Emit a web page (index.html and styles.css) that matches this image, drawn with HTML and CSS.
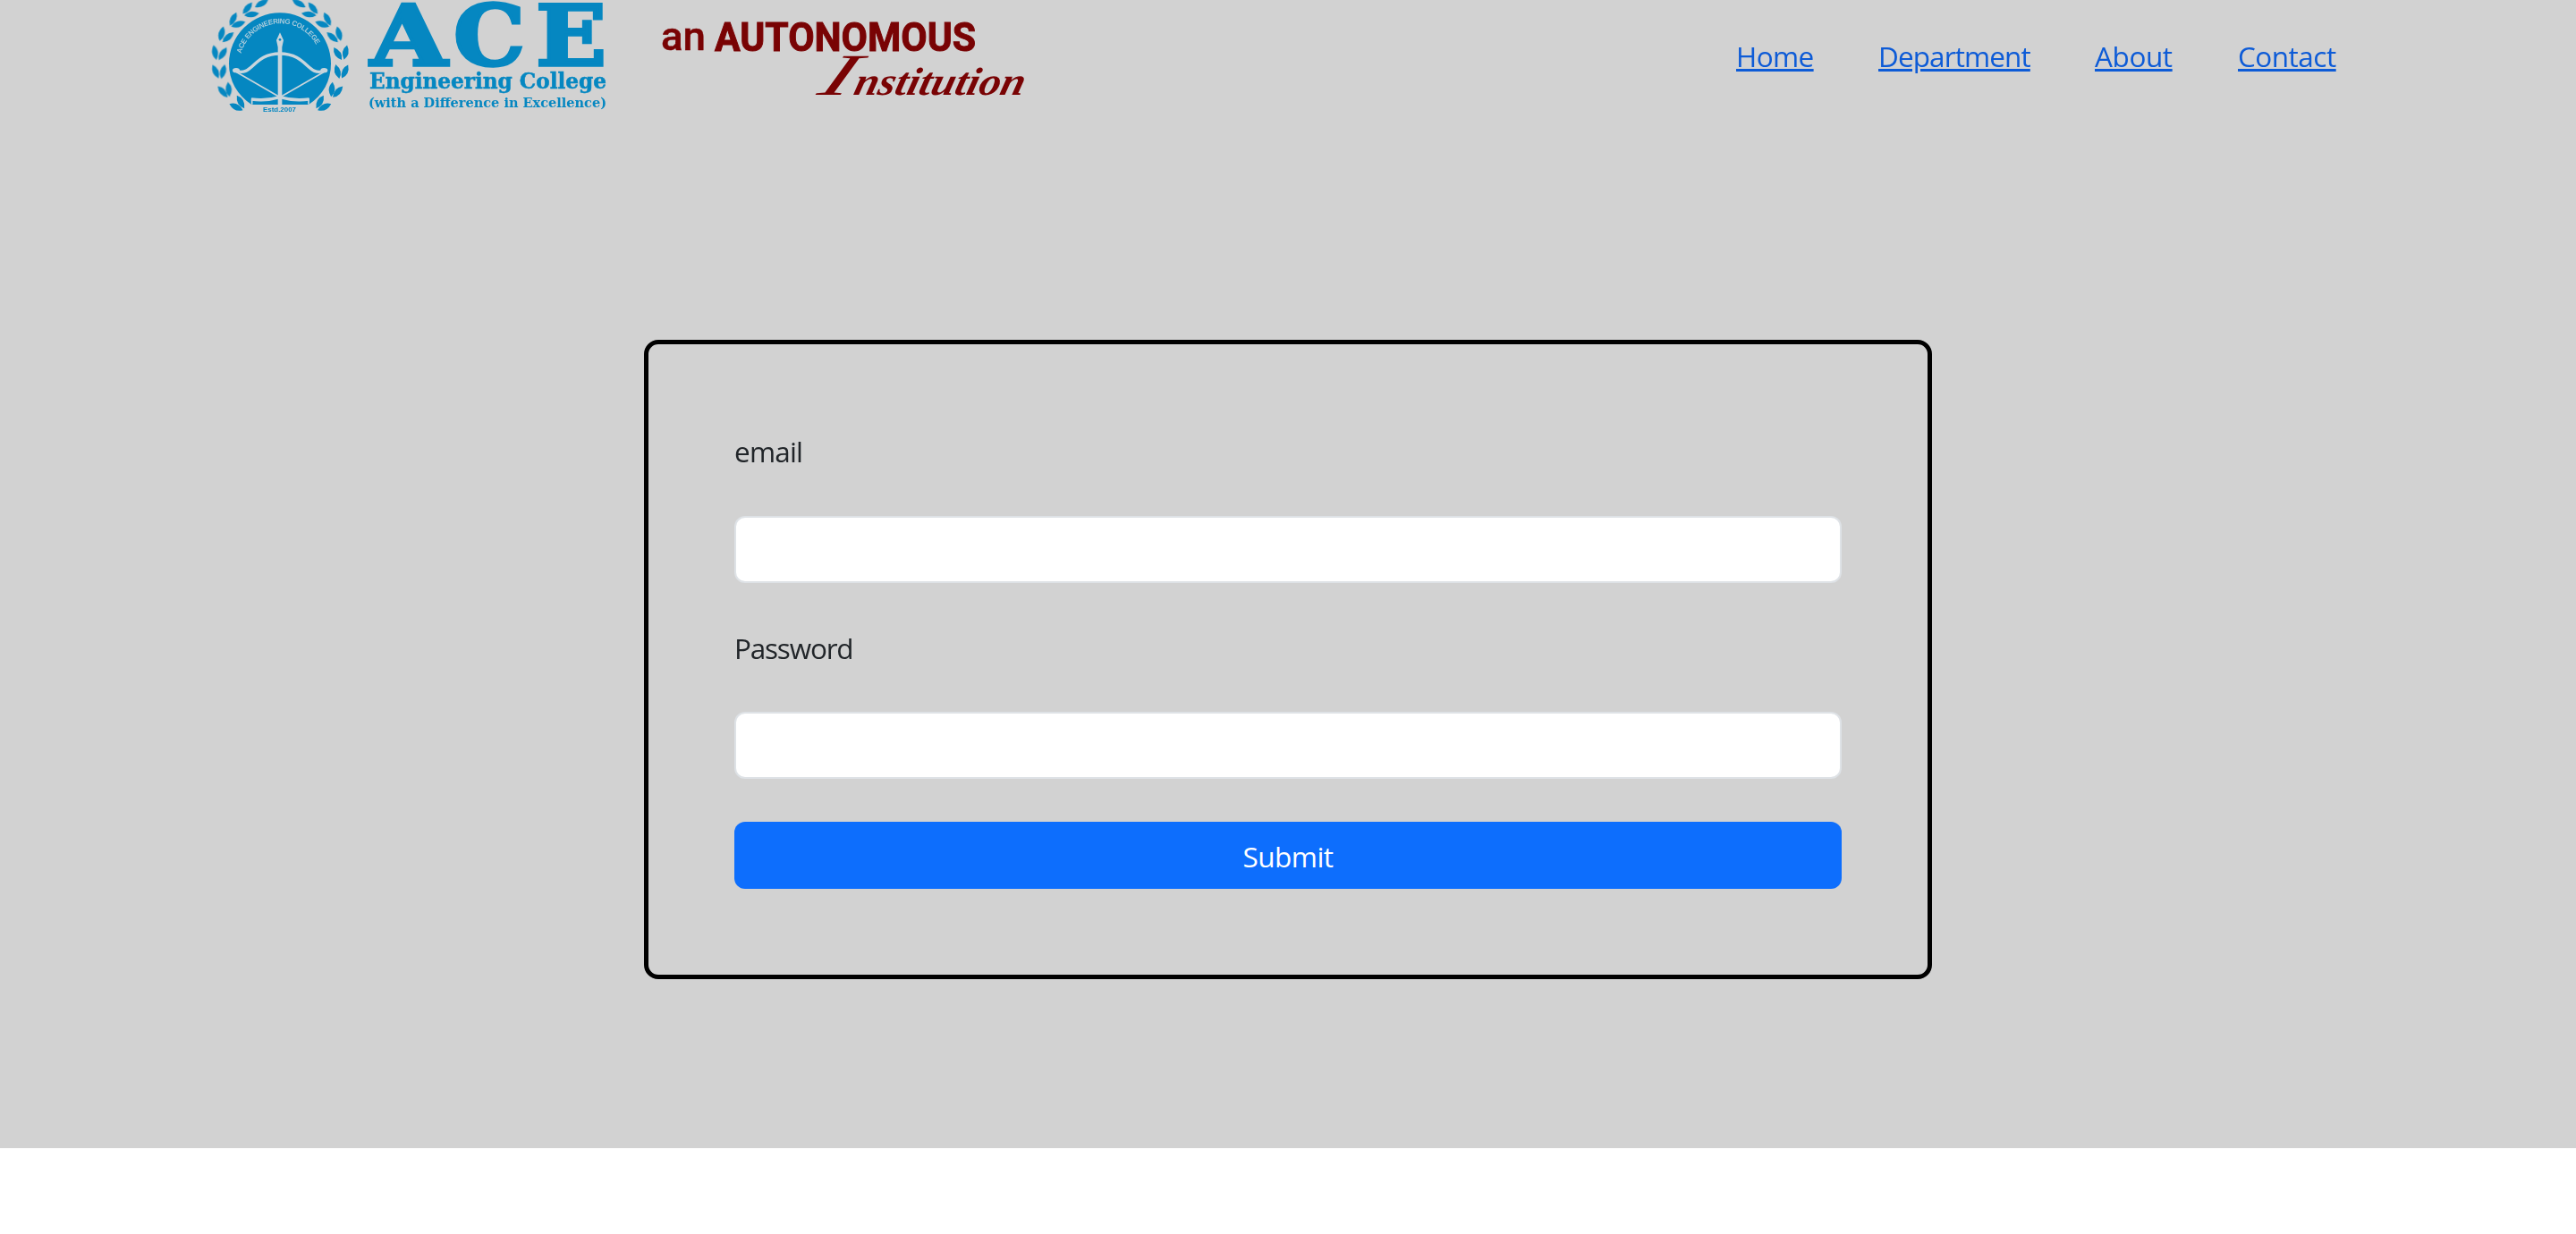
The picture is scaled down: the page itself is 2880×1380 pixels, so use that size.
FILE: index.html
```html
<!DOCTYPE html>
<html lang="en">
<head>
<meta charset="utf-8">
<title>ACE Engineering College</title>
<link rel="stylesheet" href="styles.css">
</head>
<body>
<div class="page">
  <header class="header">
    <svg class="brand" viewBox="220 0 960 140" role="img" aria-label="ACE Engineering College, an autonomous institution">
      <defs>
        <path id="leaf" d="M-25 0Q-2-20 25 0Q2 20-25 0Z"/>
        <path id="arc" d="M149 180A136 136 0 0 1 412 180"/>
        <g id="branch">
          <use href="#leaf" transform="translate(217 12) rotate(-28)"/>
          <use href="#leaf" transform="translate(170 27) rotate(-52)"/>
          <use href="#leaf" transform="translate(184 48) rotate(-8)"/>
          <use href="#leaf" transform="translate(122 64) rotate(-64)"/>
          <use href="#leaf" transform="translate(139 81) rotate(-20)"/>
          <use href="#leaf" transform="translate(83 113) rotate(-76)"/>
          <use href="#leaf" transform="translate(105 125) rotate(-42)"/>
          <use href="#leaf" transform="translate(61 176) rotate(78)"/>
          <use href="#leaf" transform="translate(87 180) rotate(-58)"/>
          <use href="#leaf" transform="translate(63 240) rotate(65)"/>
          <use href="#leaf" transform="translate(88 240) rotate(-76)"/>
          <use href="#leaf" transform="translate(87 308) rotate(48)"/>
          <use href="#leaf" transform="translate(107 300) rotate(84)"/>
          <use href="#leaf" transform="translate(132 359) rotate(25)"/>
          <use href="#leaf" transform="translate(147 342) rotate(60)"/>
        </g>
      </defs>
      <g class="soft">
        <g transform="translate(220 0) scale(.33333)">
          <g class="blue">
            <use href="#branch"/>
            <use href="#branch" transform="translate(560 0) scale(-1 1)"/>
            <path d="M184 351C135 320 108 270 108 214A171 171 0 0 1 450 214C450 270 424 320 375 351Z"/>
          </g>
          <g class="bow">
            <path class="thick" d="M128 237C190 260 185 181 279 180C374 181 369 260 431 237"/>
            <path class="thin" d="M130 240L279 326L429 240"/>
            <path class="thick" d="M183 333Q232 340 279 326Q326 340 377 333"/>
            <path class="thin" d="M185 330V350M375 330V350"/>
            <ellipse class="fill" cx="132" cy="236" rx="12" ry="8"/>
            <ellipse class="fill" cx="427" cy="236" rx="12" ry="8"/>
            <path class="fill" d="M279 109L291 135L286 158V355H272V158L267 135Z"/>
            <circle class="blue" cx="279" cy="133" r="4"/>
          </g>
          <text class="seal-text"><textPath href="#arc" textLength="325">ACE ENGINEERING COLLEGE</textPath></text>
          <text class="estd blue" x="222" y="374" textLength="111" lengthAdjust="spacingAndGlyphs">Estd.2007</text>
        </g>
        <g class="blue slab">
          <g class="ace">
            <text x="414" y="72.500" textLength="86" lengthAdjust="spacingAndGlyphs">A</text>
            <text x="507" y="73" textLength="80" lengthAdjust="spacingAndGlyphs">C</text>
            <text x="599" y="72.500" textLength="79" lengthAdjust="spacingAndGlyphs">E</text>
          </g>
          <text class="college" x="413" y="99" textLength="265" lengthAdjust="spacingAndGlyphs">Engineering College</text>
          <text class="motto" x="412" y="119.500" textLength="266" lengthAdjust="spacingAndGlyphs">(with a Difference in Excellence)</text>
        </g>
        <g class="maroon">
          <text class="an" x="739" y="56" textLength="50" lengthAdjust="spacingAndGlyphs">an</text>
          <text class="auto" x="799" y="57" textLength="292" lengthAdjust="spacingAndGlyphs">AUTONOMOUS</text>
          <g class="script">
            <text class="initial" transform="translate(912 106) skewX(-24)" x="0" y="0" textLength="36" lengthAdjust="spacingAndGlyphs">I</text>
            <text transform="translate(953 106) skewX(-14)" x="0" y="0" textLength="190" lengthAdjust="spacingAndGlyphs">nstitution</text>
          </g>
        </g>
      </g>
    </svg>
    <nav class="nav">
      <a class="home" href="#">Home</a>
      <a class="department" href="#">Department</a>
      <a class="about" href="#">About</a>
      <a class="contact" href="#">Contact</a>
    </nav>
  </header>
  <main class="main">
    <form class="card">
      <label for="email">email</label>
      <input id="email" type="email">
      <label class="password" for="password">Password</label>
      <input id="password" type="password">
      <button type="button">Submit</button>
    </form>
  </main>
</div>
</body>
</html>
```
FILE: styles.css
```css
* { box-sizing: border-box; }
body {
  margin: 0;
  background: #fff;
  color: #212529;
  font: 31.5px/48px "Segoe UI", "Open Sans", "Noto Sans", sans-serif;
}
.page { height: 1284px; background: #d2d2d2; }
.header {
  display: flex;
  justify-content: space-between;
  height: 140px;
  padding: 0 268px 0 220px;
}
.brand { width: 960px; height: 140px; flex: none; }
.nav { display: flex; gap: 73px; padding-top: 39px; }
.nav a {
  color: #0d5bd7;
  white-space: nowrap;
  text-decoration-thickness: 3px;
  text-underline-offset: 2px;
}
.home { width: 86px; letter-spacing: -.6px; }
.department { width: 169px; letter-spacing: -.9px; }
.about { width: 87px; letter-spacing: -.4px; }
.contact { width: 110px; letter-spacing: -.5px; }

.main { display: flex; justify-content: center; padding-top: 240px; }
.card {
  display: flex;
  flex-direction: column;
  width: 1440px;
  height: 715px;
  padding: 96px 96px 0;
  border: 5px solid #000;
  border-radius: 16px;
}
.card label { height: 48px; letter-spacing: -.8px; }
.card .password { margin-top: 49px; letter-spacing: -1.2px; }
.card input {
  width: 1238px;
  height: 75px;
  margin: 48px 0 0;
  padding: 12px 24px;
  border: 2px solid #dee2e6;
  border-radius: 12px;
  background: #fff;
  font: inherit;
}
.card #password { margin-top: 47px; }
.card button {
  height: 75px;
  margin-top: 48px;
  padding: 3px 0 0;
  border: 0;
  border-radius: 12px;
  background: #0d6efd;
  color: #fff;
  font: inherit;
  letter-spacing: -.5px;
}

.soft { filter: blur(.6px); }
.blue { fill: #0587c1; }
.maroon { fill: #790304; }
.bow { fill: none; stroke: #c9d5dc; }
.thick { stroke-width: 10; }
.thin { stroke-width: 5; }
.fill { fill: #c9d5dc; stroke: none; }
.bow .blue { stroke: none; }
.seal-text { fill: #a8cbdc; font: bold 24px "Liberation Sans", sans-serif; }
.estd { font: bold 23px "Liberation Sans", sans-serif; }
.slab { font-family: "DejaVu Serif", serif; font-weight: bold; }
.ace { font-size: 94px; stroke: #0587c1; stroke-width: 3.5px; }
.college { font-size: 24px; stroke: #0587c1; stroke-width: .5px; }
.motto { font-size: 15.5px; }
.an { font: 500 45px Roboto, sans-serif; stroke: #790304; stroke-width: .5px; }
.auto { font: bold 45px Roboto, sans-serif; stroke: #790304; stroke-width: 1px; }
.script { font: italic bold 44px "Liberation Serif", serif; }
.initial { font-size: 66px; font-weight: normal; }
```
